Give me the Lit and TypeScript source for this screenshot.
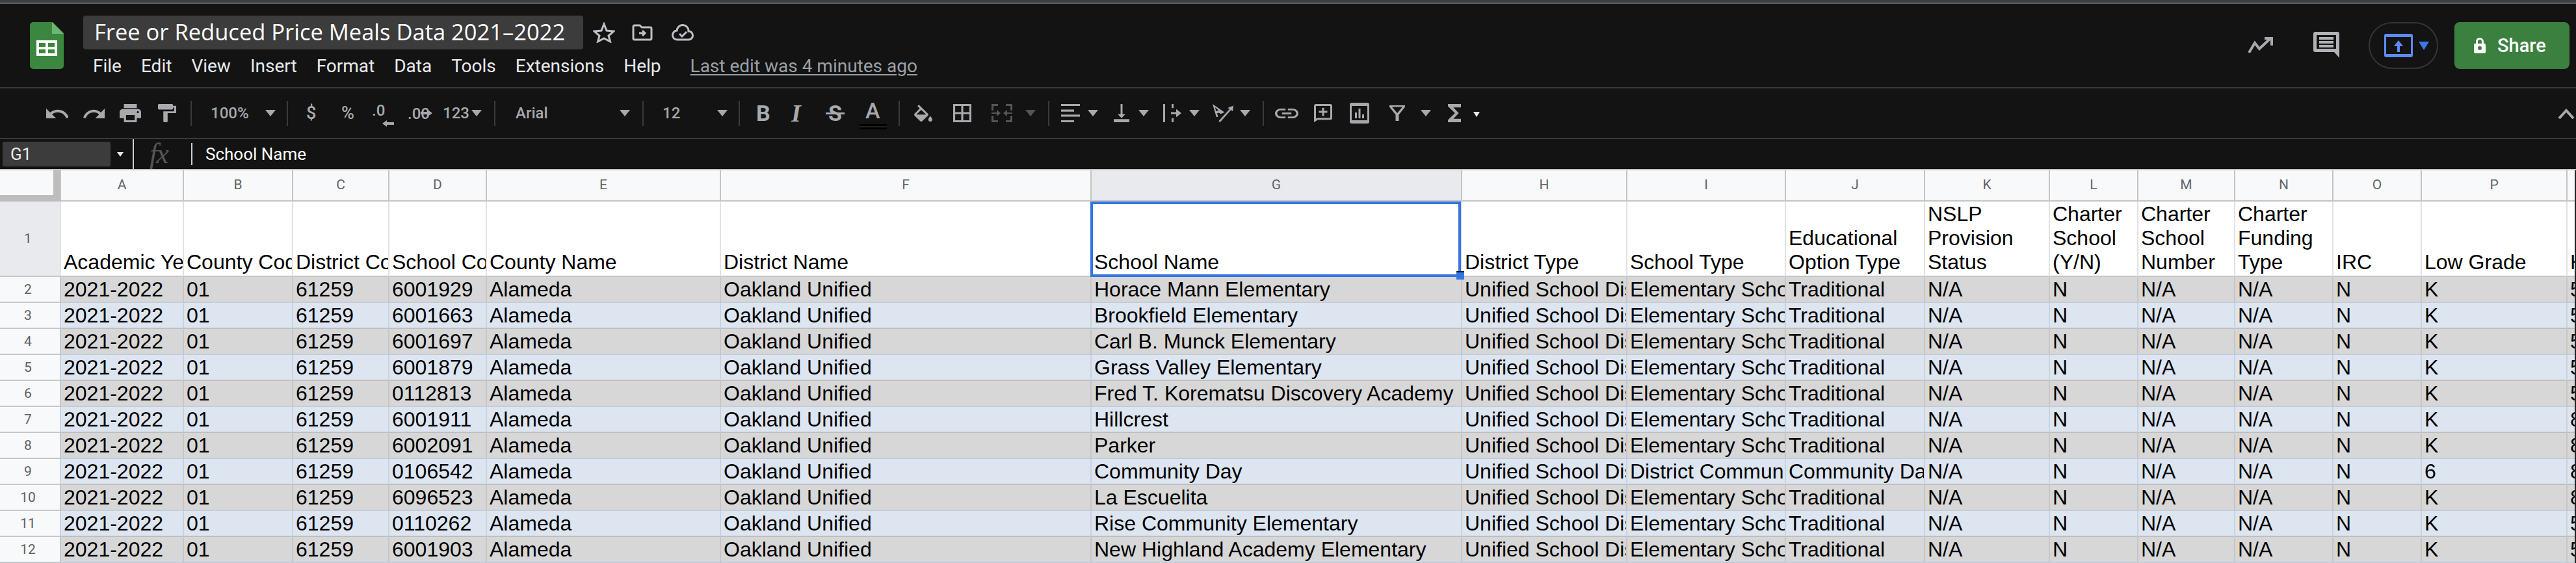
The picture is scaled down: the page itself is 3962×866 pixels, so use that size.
import { LitElement, css, html, svg } from 'lit';
import { customElement } from 'lit/decorators.js';

type Tool = {
  at: number;
  w: number;
  kind: 'icon' | 'text' | 'caret' | 'div' | 'small' | 'dim';
  h?: number;
  vb?: string;
  d?: string;
  label?: string;
  cls?: string;
};

const P = {
  undo: 'M12.5 8c-2.65 0-5.05.99-6.9 2.6L2 7v9h9l-3.62-3.62c1.39-1.16 3.16-1.88 5.12-1.88 3.54 0 6.55 2.31 7.6 5.5l2.37-.78C21.08 11.03 17.15 8 12.5 8z',
  redo: 'M18.4 10.6C16.55 8.99 14.15 8 11.5 8c-4.65 0-8.58 3.03-9.96 7.22L3.9 16c1.05-3.19 4.05-5.5 7.6-5.5 1.95 0 3.73.72 5.12 1.88L13 16h9V7l-3.6 3.6z',
  print: 'M19 8H5c-1.66 0-3 1.34-3 3v6h4v4h12v-4h4v-6c0-1.66-1.34-3-3-3zm-3 11H8v-5h8v5zm3-7c-.55 0-1-.45-1-1s.45-1 1-1 1 .45 1 1-.45 1-1 1zm-1-9H6v4h12V3z',
  paint: 'M18 4V3c0-.55-.45-1-1-1H5c-.55 0-1 .45-1 1v4c0 .55.45 1 1 1h12c.55 0 1-.45 1-1V6h1v4H9v11c0 .55.45 1 1 1h2c.55 0 1-.45 1-1v-9h8V4h-3z',
  fill: 'M16.56 8.94L7.62 0 6.21 1.41l2.38 2.38-5.15 5.15c-.59.59-.59 1.54 0 2.12l5.5 5.5c.29.29.68.44 1.06.44s.77-.15 1.06-.44l5.5-5.5c.59-.58.59-1.53 0-2.12zM5.21 10L10 5.21 14.79 10H5.21zM19 11.5s-2 2.17-2 3.5c0 1.1.9 2 2 2s2-.9 2-2c0-1.33-2-3.5-2-3.5z',
  borders: 'M3 3v18h18V3H3zm8 16H5v-6h6v6zm0-8H5V5h6v6zm8 8h-6v-6h6v6zm0-8h-6V5h6v6z',
  merge: 'M0 0h10v3H3v7H0zM22 0h10v10h-3V3h-7zM0 18h3v7h7v3H0zM29 18h3v10H22v-3h7zM0 13h8V9l6 5-6 5v-4H0zM32 13h-8V9l-6 5 6 5v-4h8z',
  halign: 'M0 0h29v4H0zM0 11h20v4H0zM0 21h29v4H0zM0 32h20v4H0z',
  valign: 'M16 13h-3V3h-2v10H8l4 4 4-4zM4 18v3h16v-3H4z',
  wrap: 'M0 0h3v36H0zM13 0h3v8h-3zM13 28h3v8h-3zM12 16h8v-6l8 8-8 8v-6h-8z',
  link: 'M3.9 12c0-1.71 1.39-3.1 3.1-3.1h4V7H7c-2.76 0-5 2.24-5 5s2.24 5 5 5h4v-1.9H7c-1.71 0-3.1-1.39-3.1-3.1zM8 13h8v-2H8v2zm9-6h-4v1.9h4c1.71 0 3.1 1.39 3.1 3.1s-1.39 3.1-3.1 3.1h-4V17h4c2.76 0 5-2.24 5-5s-2.24-5-5-5z',
  comment: 'M3 0h22a3 3 0 013 3v19a3 3 0 01-3 3H6l-6 4V3a3 3 0 013-3zM3 3v20l3-1h19V3zM12.500 6h3v5h5v3h-5v5h-3v-5h-5v-3h5z',
  chart: 'M3 0h24a3 3 0 013 3v26a3 3 0 01-3 3H3a3 3 0 01-3-3V3a3 3 0 013-3zM3 5v22h24V5zM8 15h3v9H8zM13.500 9h3v15h-3zM19 18h3v6h-3z',
  filter: 'M0 0h24v3L14.500 18v12h-5V18L0 3zM4 3l8 12 8-12z',
  sigma: 'M18 4H6v2l6.5 6L6 18v2h12v-3h-7l5-5-5-5h7z',
  rotate: 'M0 0l19 15-6 3-3-2-3 1 2 6-3 1zM4 6l1.500 7 4-1.500zM33 3l-1 10-3-2-17 22-2.500-2L27 9l-3-2z',
};

const T: Tool[] = [
  { at: 71, w: 34, h: 15, kind: 'icon', vb: '2 7 20 9', d: P.undo },
  { at: 128, w: 33, h: 15, kind: 'icon', vb: '1.500 7 20.500 9', d: P.redo },
  { at: 184, w: 33, h: 28, kind: 'icon', vb: '2 3 20 18', d: P.print },
  { at: 243, w: 28, h: 28, kind: 'icon', vb: '4 2 17 20', d: P.paint },
  { at: 293, w: 2, kind: 'div' },
  { at: 324, w: 60, kind: 'text', label: '100%' },
  { at: 408, w: 16, kind: 'caret' },
  { at: 441, w: 2, kind: 'div' },
  { at: 471, w: 16, kind: 'text', label: '$', cls: 'big' },
  { at: 525, w: 20, kind: 'text', label: '%', cls: 'big' },
  { at: 572, w: 24, kind: 'text', label: '.0', cls: 'dec left' },
  { at: 627, w: 36, kind: 'text', label: '.00', cls: 'dec right' },
  { at: 681, w: 40, kind: 'text', label: '123' },
  { at: 725, w: 16, kind: 'caret' },
  { at: 760, w: 2, kind: 'div' },
  { at: 793, w: 60, kind: 'text', label: 'Arial' },
  { at: 953, w: 16, kind: 'caret' },
  { at: 988, w: 2, kind: 'div' },
  { at: 1019, w: 30, kind: 'text', label: '12' },
  { at: 1103, w: 16, kind: 'caret' },
  { at: 1136, w: 2, kind: 'div' },
  { at: 1163, w: 22, kind: 'text', label: 'B', cls: 'bold' },
  { at: 1217, w: 24, kind: 'text', label: 'I', cls: 'ital' },
  { at: 1270, w: 29, kind: 'text', label: 'S', cls: 'strike' },
  { at: 1331, w: 24, kind: 'text', label: 'A', cls: 'colour' },
  { at: 1382, w: 2, kind: 'div' },
  { at: 1406, w: 28, h: 26, kind: 'icon', vb: '3 0 18 17', d: P.fill },
  { at: 1466, w: 28, h: 28, kind: 'icon', vb: '3 3 18 18', d: P.borders },
  { at: 1525, w: 32, h: 28, kind: 'dim', vb: '0 0 32 28', d: P.merge },
  { at: 1577, w: 16, kind: 'caret', cls: 'off' },
  { at: 1612, w: 2, kind: 'div' },
  { at: 1632, w: 29, h: 28, kind: 'icon', vb: '0 0 29 36', d: P.halign },
  { at: 1673, w: 16, kind: 'caret' },
  { at: 1713, w: 24, h: 28, kind: 'icon', vb: '4 3 16 18', d: P.valign },
  { at: 1751, w: 16, kind: 'caret' },
  { at: 1789, w: 28, h: 28, kind: 'icon', vb: '0 0 28 36', d: P.wrap },
  { at: 1829, w: 16, kind: 'caret' },
  { at: 1865, w: 32, h: 28, kind: 'icon', vb: '0 0 33 33', d: P.rotate },
  { at: 1907, w: 16, kind: 'caret' },
  { at: 1942, w: 2, kind: 'div' },
  { at: 1961, w: 36, h: 15, kind: 'icon', vb: '2 7 20 10', d: P.link },
  { at: 2021, w: 28, h: 28, kind: 'icon', vb: '0 0 28 29', d: P.comment },
  { at: 2076, w: 30, h: 32, kind: 'icon', vb: '0 0 30 32', d: P.chart },
  { at: 2137, w: 24, h: 24, kind: 'icon', vb: '0 0 24 30', d: P.filter },
  { at: 2185, w: 16, kind: 'caret' },
  { at: 2227, w: 20, h: 28, kind: 'icon', vb: '6 4 12 16', d: P.sigma },
  { at: 2266, w: 11, kind: 'small' },
];

const COLS = [189, 168, 148, 150, 360, 570, 570, 254, 244, 214, 192, 136, 149, 151, 136, 224, 13];
const LETTERS = 'ABCDEFGHIJKLMNOPQ'.split('');
const HEAD = [
  'Academic Year', 'County Code', 'District Code', 'School Code', 'County Name', 'District Name', 'School Name',
  'District Type', 'School Type', 'Educational Option Type', 'NSLP Provision Status', 'Charter School (Y/N)',
  'Charter School Number', 'Charter Funding Type', 'IRC', 'Low Grade', 'High Grade',
];
// code, school, school type, option, low, high
const ROWS: string[][] = [
  ['6001929', 'Horace Mann Elementary', 'Elementary Schools', 'Traditional', 'K', '5'],
  ['6001663', 'Brookfield Elementary', 'Elementary Schools', 'Traditional', 'K', '5'],
  ['6001697', 'Carl B. Munck Elementary', 'Elementary Schools', 'Traditional', 'K', '5'],
  ['6001879', 'Grass Valley Elementary', 'Elementary Schools', 'Traditional', 'K', '5'],
  ['0112813', 'Fred T. Korematsu Discovery Academy', 'Elementary Schools', 'Traditional', 'K', '5'],
  ['6001911', 'Hillcrest', 'Elementary Schools', 'Traditional', 'K', '8'],
  ['6002091', 'Parker', 'Elementary Schools', 'Traditional', 'K', '8'],
  ['0106542', 'Community Day', 'District Community Day', 'Community Day', '6', '8'],
  ['6096523', 'La Escuelita', 'Elementary Schools', 'Traditional', 'K', '8'],
  ['0110262', 'Rise Community Elementary', 'Elementary Schools', 'Traditional', 'K', '5'],
  ['6001903', 'New Highland Academy Elementary', 'Elementary Schools', 'Traditional', 'K', '5'],
];
const MENU = ['File', 'Edit', 'View', 'Insert', 'Format', 'Data', 'Tools', 'Extensions', 'Help'];
const gridCols = `92px ${COLS.map((c) => c + 'px').join(' ')} 2px`;

@customElement('app-root')
export class AppRoot extends LitElement {
  static styles = css`
    :host {
      display: block;
      width: 3962px;
      height: 866px;
      overflow: hidden;
      background: #131313;
      font-family: Roboto, sans-serif;
    }
    .strip {
      height: 4px;
      background: #3c4043;
      border-bottom: 2px solid #5f5f5f;
    }
    .top {
      height: 128px;
      display: flex;
      box-sizing: border-box;
      padding: 18px 10px 0 46px;
      border-bottom: 0;
    }
    .logo {
      margin-top: 10px;
      flex: none;
    }
    .titles {
      margin-left: 30px;
      display: flex;
      flex-direction: column;
    }
    .title-row {
      display: flex;
      align-items: center;
      height: 52px;
    }
    .title {
      height: 52px;
      width: 769px;
      box-sizing: border-box;
      padding: 0 0 0 17px;
      background: #3c3c3c;
      border-radius: 4px;
      color: #fff;
      font-family: 'Open Sans', sans-serif;
      font-size: 34.500px;
      line-height: 50px;
      white-space: nowrap;
    }
    .title-row svg { fill: none; stroke: #bdc1c6; stroke-width: 3; flex: none; }
    .star { margin-left: 15px; }
    .move { margin-left: 26px; }
    .cloud { margin-left: 29px; }
    .menu {
      display: flex;
      align-items: baseline;
      margin: 6px 0 0 15px;
      font-size: 28px;
      line-height: 40px;
      color: #e8eaed;
      gap: 30px;
    }
    .last {
      margin-left: 15px;
      color: #9aa0a6;
      text-decoration: underline;
      text-underline-offset: 3px;
    }
    .right {
      margin-left: auto;
      margin-top: 10px;
      display: flex;
      align-items: flex-start;
      height: 72px;
    }
    .trend { margin-top: 23px; stroke: #a7a9ad; fill: none; }
    .notes { margin: 15px 0 0 61px; fill: #b0b2b6; }
    .present {
      margin-left: 45px;
      width: 107px;
      height: 72px;
      box-sizing: border-box;
      border: 2px solid #333538;
      border-radius: 36px;
      display: flex;
      align-items: center;
      padding-left: 22px;
    }
    .present i {
      margin-left: 9px;
      border-left: 8px solid transparent;
      border-right: 8px solid transparent;
      border-top: 13px solid #3b78e7;
    }
    .share {
      margin-left: 25px;
      width: 177px;
      height: 72px;
      border-radius: 8px;
      background: #3c803f;
      color: #fff;
      font-weight: 500;
      font-size: 29px;
      display: flex;
      align-items: center;
      box-sizing: border-box;
      padding-left: 30px;
      gap: 18px;
    }
    .share svg { fill: #fff; }
    .line { height: 2px; background: #3a3a3c; }
    .tools {
      height: 76px;
      display: flex;
      align-items: center;
      position: relative;
      color: #a7a9ad;
      font-weight: 500;
      font-size: 24px;
    }
    .tool {
      flex: none;
      display: flex;
      align-items: center;
      position: relative;
      white-space: nowrap;
      line-height: 30px;
    }
    .tool svg { fill: #a7a9ad; display: block; }
    .tool.dim svg { fill: #555; }
    .sep { width: 2px; height: 39px; background: #3a3a3c; flex: none; }
    .caret {
      flex: none;
      width: 0;
      border-left: 8px solid transparent;
      border-right: 8px solid transparent;
      border-top: 10px solid #a7a9ad;
    }
    .caret.off { border-top-color: #555; }
    .caret.small {
      border-left-width: 5.500px;
      border-right-width: 5.500px;
      border-top: 8px solid #e8eaed;
      margin-top: 4px;
    }
    .tool.big { font-size: 27px; }
    .tool.bold { font-size: 34px; font-weight: 700; }
    .tool.ital { font-family: 'Liberation Serif', serif; font-style: italic; font-weight: 700; font-size: 38px; }
    .tool.strike { font-size: 34px; font-weight: 700; justify-content: center; }
    .tool.strike::after {
      content: '';
      position: absolute;
      left: 0;
      right: 0;
      top: 14px;
      height: 3px;
      background: #a7a9ad;
    }
    .tool.colour { font-size: 34px; font-weight: 500; top: -4px; }
    .tool.colour::after {
      content: '';
      position: absolute;
      left: -9px;
      width: 42px;
      top: 36px;
      height: 8px;
      background: linear-gradient(#000 0 3px, #222 3px 5px, #000 5px);
    }
    .tool.dec { top: -4px; }
    .tool.dec svg { position: absolute; top: 30px; fill: #a7a9ad; }
    .tool.left svg { left: 16px; }
    .tool.right svg { left: 20px; }
    .collapse {
      position: absolute;
      right: 2px;
      top: 31px;
      fill: none;
      stroke: #a7a9ad;
      stroke-width: 4;
    }
    .formula {
      height: 46px;
      display: flex;
      align-items: center;
      color: #e8eaed;
      font-size: 26px;
    }
    .name {
      margin-left: 4px;
      width: 166px;
      height: 38px;
      box-sizing: border-box;
      padding-left: 12px;
      background: #3c3c3c;
      border-radius: 2px;
      line-height: 38px;
    }
    .formula .caret { margin-left: 10px; border-top-color: #e8eaed; border-left-width: 5px; border-right-width: 5px; border-top-width: 7px; }
    .bar { flex: none; width: 2px; background: #cfcfcf; }
    .bar.a { height: 46px; margin-left: 14px; }
    .bar.b { height: 34px; margin-left: 28px; }
    .fx {
      width: 36px;
      margin-left: 24px;
      font: italic 44px/46px 'Liberation Serif', serif;
      color: #555;
      letter-spacing: -2px;
    }
    .value { margin-left: 20px; color: #fff; }
    .grid {
      display: grid;
      border-top: 2px solid #c4c7c5;
      background: #fff;
      position: relative;
    }
    .corner {
      height: 48px;
      box-sizing: border-box;
      background: #bdbdbd;
      border-right: 2px solid #bdbdbd;
      position: relative;
    }
    .corner::before {
      content: '';
      display: block;
      width: 82px;
      height: 38px;
      background: #f8f9fa;
    }
    .letter {
      height: 48px;
      box-sizing: border-box;
      background: #f8f9fa;
      border-left: 2px solid #c4c4c4;
      border-bottom: 2px solid #c4c4c4;
      color: #5f6368;
      font-size: 21px;
      line-height: 44px;
      text-align: center;
    }
    .letter.sel { background: #e8eaed; }
    .letter.end, .cell.end, .head.end { background: #222; border: 0; padding: 0; }
    .rownum {
      height: 40px;
      box-sizing: border-box;
      background: #f8f9fa;
      border-bottom: 2px solid #c4c7cc;
      color: #5f6368;
      font-size: 21px;
      line-height: 38px;
      text-align: center;
      padding-right: 6px;
    }
    .rownum.first { height: 116px; line-height: 114px; background: #e8eaed; }
    .head, .cell {
      box-sizing: border-box;
      padding-left: 4px;
      overflow: hidden;
      color: #000;
      font-family: 'Liberation Sans', Arial, sans-serif;
      font-size: 32px;
    }
    .head {
      height: 116px;
      padding-bottom: 2px;
      display: flex;
      align-items: flex-end;
      line-height: 37px;
      background: #fff;
      border-left: 2px solid #e2e2e2;
      border-bottom: 2px solid #c4c4c4;
      position: relative;
      overflow: hidden;
    }
    .head span { display: block; min-width: 0; }
    .head.clip span { white-space: nowrap; }
    .head.sel { overflow: visible; z-index: 1; }
    .head.sel::before {
      content: '';
      position: absolute;
      left: -2px;
      top: 0;
      right: 0;
      bottom: -2px;
      border: 4px solid #3574e3;
    }
    .head.sel::after {
      content: '';
      position: absolute;
      right: -5px;
      bottom: -6px;
      width: 12px;
      height: 11px;
      background: #3574e3;
      border-top: 2px solid #1a1a1a;
    }
    .cell {
      height: 40px;
      line-height: 38px;
      white-space: nowrap;
      border-left: 2px solid;
      border-bottom: 2px solid;
    }
    .cell.grey { background: #d7d7d7; border-left-color: #c6c6c6; border-bottom-color: #c3ccd8; }
    .cell.blue { background: #dde5f0; border-left-color: #c9d3e0; border-bottom-color: #bfbfbf; }
  `;

  private tool(t: Tool, prevEnd: number) {
    const margin = `margin-left:${t.at - prevEnd}px`;
    if (t.kind === 'div') return html`<div class="sep" style=${margin}></div>`;
    if (t.kind === 'caret') return html`<div class="caret ${t.cls ?? ''}" style=${margin}></div>`;
    if (t.kind === 'small') return html`<div class="caret small" style=${margin}></div>`;
    const size = `${margin};width:${t.w}px`;
    if (t.kind === 'text') {
      const dec = t.cls?.startsWith('dec');
      const arrow = t.cls?.includes('left') ? 'M7 0v3h11v4H7v3L0 5z' : 'M11 0v3H0v4h11v3l7-5z';
      return html`<div class="tool ${t.cls ?? ''}" style=${size}>
        ${t.label}${dec
          ? html`<svg width="18" height="10" viewBox="0 0 18 10"><path d=${arrow}></path></svg>`
          : ''}
      </div>`;
    }
    return html`<div class="tool ${t.kind === 'dim' ? 'dim' : ''}" style=${size}>
      <svg width=${t.w} height=${t.h ?? t.w} viewBox=${t.vb ?? ''} preserveAspectRatio="none"><path fill-rule="evenodd" d=${t.d ?? ''}></path></svg>
    </div>`;
  }

  private renderTools() {
    let end = 0;
    return T.map((t) => {
      const out = this.tool(t, end);
      end = t.at + t.w;
      return out;
    });
  }

  private rowCells(r: string[]) {
    return [
      '2021-2022', '01', '61259', r[0], 'Alameda', 'Oakland Unified', r[1], 'Unified School District', r[2], r[3],
      'N/A', 'N', 'N/A', 'N/A', 'N', r[4], r[5],
    ];
  }

  render() {
    return html`
      <div class="strip"></div>
      <div class="top">
        <svg class="logo" width="52" height="72" viewBox="0 0 52 72">
          <path d="M5 0h30l17 17v50a5 5 0 01-5 5H5a5 5 0 01-5-5V5a5 5 0 015-5z" fill="#3c873f"></path>
          <path d="M34 0l18 18H34z" fill="#6fb572"></path>
          <path d="M10 28h32v24H10zM14 32v6h10v-6zM28 32v6h10v-6zM14 42v6h10v-6zM28 42v6h10v-6z" fill="#fff" fill-rule="evenodd"></path>
        </svg>
        <div class="titles">
          <div class="title-row">
            <div class="title">Free or Reduced Price Meals Data 2021–2022</div>
            <svg class="star" width="34" height="32" viewBox="0 0 34 32"><path d="M17 3l4 10 11 1-8 7 2.500 9L17 25l-9.500 5L10 21l-8-7 11-1z"></path></svg>
            <svg class="move" width="32" height="26" viewBox="0 0 32 26"><path d="M2 4a2 2 0 012-2h8l3 3h13a2 2 0 012 2v15a2 2 0 01-2 2H4a2 2 0 01-2-2zM11 14h9M16 10l4 4-4 4"></path></svg>
            <svg class="cloud" width="34" height="26" viewBox="0 0 34 26"><path d="M9 24a7 7 0 01-1-14 9 9 0 0118 1 6.500 6.500 0 010 13zM12 15l4 4 7-7"></path></svg>
          </div>
          <div class="menu">
            ${MENU.map((m) => html`<span>${m}</span>`)}
            <span class="last">Last edit was 4 minutes ago</span>
          </div>
        </div>
        <div class="right">
          <svg class="trend" width="40" height="26" viewBox="0 0 40 26" stroke-width="4"><path d="M2 24l9-15 7 9L34 3M26 2h11v11"></path></svg>
          <svg class="notes" width="40" height="40" viewBox="0 0 40 40"><path fill-rule="evenodd" d="M3 0h34a3 3 0 013 3v37l-8-9H3a3 3 0 01-3-3V3a3 3 0 013-3zM5 5v21h30V5zM9 8h22v4H9zM9 14h22v4H9zM9 20h22v4H9z"></path></svg>
          <div class="present">
            <svg width="44" height="36" viewBox="0 0 44 36"><path fill="#5b8cf5" fill-rule="evenodd" d="M3 0h38a3 3 0 013 3v30a3 3 0 01-3 3H3a3 3 0 01-3-3V3a3 3 0 013-3zM3 5v26h38V5zM22 10l7 9h-5v9h-4v-9h-5z"></path></svg>
            <i></i>
          </div>
          <div class="share">
            <svg width="18" height="24" viewBox="0 0 18 24"><path fill-rule="evenodd" d="M3 9V6a6 6 0 0112 0v3h1a2 2 0 012 2v11a2 2 0 01-2 2H2a2 2 0 01-2-2V11a2 2 0 012-2zM6 9h6V6a3 3 0 00-6 0zM9 13a3 3 0 100 6 3 3 0 000-6z"></path></svg>
            <span>Share</span>
          </div>
        </div>
      </div>
      <div class="line"></div>
      <div class="tools">
        ${this.renderTools()}
        <svg class="collapse" width="26" height="16" viewBox="0 0 26 16">${svg`<path d="M2 15L13 3l11 12"></path>`}</svg>
      </div>
      <div class="line"></div>
      <div class="formula">
        <div class="name">G1</div>
        <div class="caret"></div>
        <div class="bar a"></div>
        <div class="fx">fx</div>
        <div class="bar b"></div>
        <div class="value">School Name</div>
      </div>
      <div class="grid" style="grid-template-columns:${gridCols}">
        <div class="corner"></div>
        ${LETTERS.map((l) => html`<div class="letter ${l === 'G' ? 'sel' : ''}">${l === 'Q' ? '' : l}</div>`)}
        <div class="letter end"></div>
        <div class="rownum first">1</div>
        ${HEAD.map((h, i) => html`<div class="head ${i === 6 ? 'sel' : ''} ${i < 9 || i > 13 ? 'clip' : ''}"><span>${h}</span></div>`)}
        <div class="head end"></div>
        ${ROWS.map(
          (r, i) => html`
            <div class="rownum">${i + 2}</div>
            ${this.rowCells(r).map((c) => html`<div class="cell ${i % 2 ? 'blue' : 'grey'}">${c}</div>`)}
            <div class="cell end"></div>
          `
        )}
      </div>
    `;
  }
}
